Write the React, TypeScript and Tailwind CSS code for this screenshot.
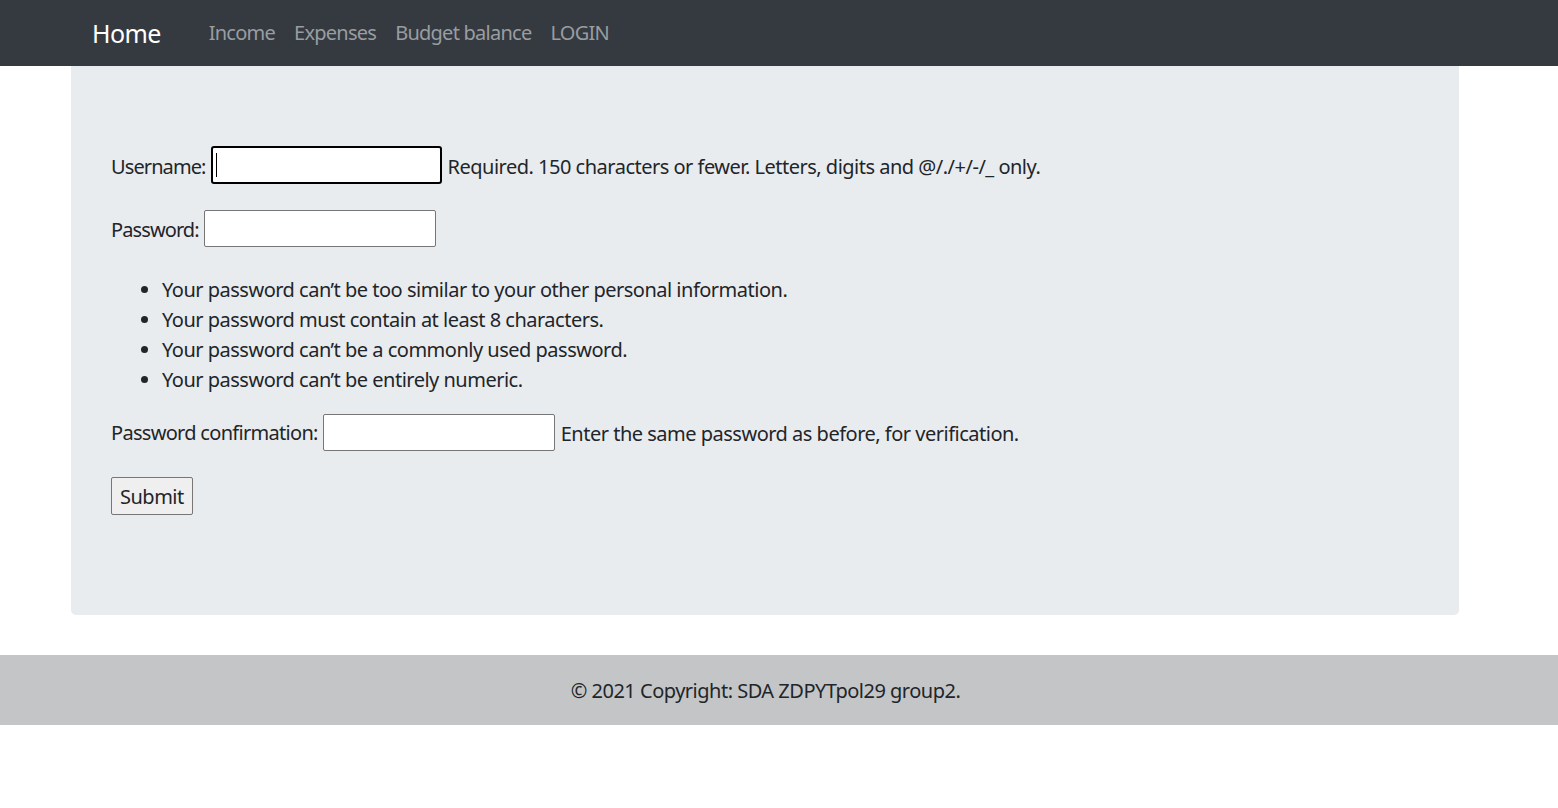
import React from "react";

const rules = [
  "Your password can’t be too similar to your other personal information.",
  "Your password must contain at least 8 characters.",
  "Your password can’t be a commonly used password.",
  "Your password can’t be entirely numeric.",
];

export default function App() {
  return (
    <div className="min-h-[808px] bg-white text-[20px] leading-[30px] tracking-[-0.5px] text-[#212529] font-['Noto_Sans',sans-serif]">
      {/* Navbar */}
      <nav className="h-[66px] bg-[#343a40] flex items-center pl-[92px]">
        <a className="text-[25px] text-white mr-[48px] tracking-[-0.6px]">Home</a>
        <div className="flex items-center gap-[19px] text-[#9a9da0] tracking-[-0.75px]">
          <a>Income</a>
          <a>Expenses</a>
          <a>Budget balance</a>
          <a>LOGIN</a>
        </div>
      </nav>

      {/* Jumbotron */}
      <div className="ml-[71px] w-[1388px] bg-[#e9ecef] rounded-b-[5px] px-[40px] pt-[80px] pb-[100px]">
        <div className="flex items-center h-[38px] mb-[26px]">
          <label className="pt-[3px] tracking-[-0.9px]">Username:</label>
          <div className="relative ml-[5px] mr-[6px]">
            <input
              type="text"
              className="block w-[231px] h-[38px] bg-white border-2 border-black rounded-[3px] outline-none"
            />
            <span className="absolute left-[5px] top-[7px] w-[1px] h-[24px] bg-black" />
          </div>
          <span className="pt-[3px]">Required. 150 characters or fewer. Letters, digits and @/./+/-/_ only.</span>
        </div>

        <div className="flex items-center h-[37px]">
          <label className="pt-[3px] tracking-[-0.9px]">Password:</label>
          <input
            type="password"
            className="block ml-[5px] w-[232px] h-[37px] bg-white border border-[#767676] rounded-[2px] outline-none"
          />
        </div>

        <ul className="list-disc pl-[51px] mt-[28px] mb-[18px]">
          {rules.map((r, i) => (
            <li key={i}>{r}</li>
          ))}
        </ul>

        <div className="flex items-center h-[38px] mb-[26px]">
          <label className="pt-[1px] tracking-[-0.7px]">Password confirmation:</label>
          <input
            type="password"
            className="block ml-[5px] mr-[6px] w-[232px] h-[37px] bg-white border border-[#767676] rounded-[2px] outline-none"
          />
          <span className="pt-[3px]">Enter the same password as before, for verification.</span>
        </div>

        <button className="h-[38px] px-[8px] pt-[2px] bg-[#efefef] border border-[#767676] rounded-[2px] leading-none">
          Submit
        </button>
      </div>

      {/* Footer */}
      <footer className="mt-[40px] h-[70px] bg-[#c4c5c7] flex items-center justify-center pr-[27px] pt-[2px]">
        © 2021 Copyright: SDA ZDPYTpol29 group2.
      </footer>
    </div>
  );
}
